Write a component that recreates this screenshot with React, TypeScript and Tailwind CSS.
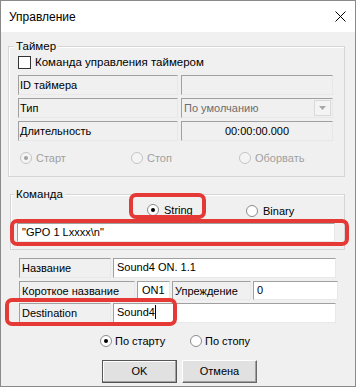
import React from "react";

const sunken = "border border-t-[#a0a0a0] border-l-[#a0a0a0] border-b-[#e8e8e8] border-r-[#e8e8e8]";

function Radio({ checked, disabled }: { checked?: boolean; disabled?: boolean }) {
  return (
    <svg width="12" height="12" viewBox="0 0 12 12" className="shrink-0">
      <circle cx="6" cy="6" r="5.5" fill={disabled ? "#f4f4f4" : "#fff"} stroke={disabled ? "#c4c4c4" : "#8a8a8a"} />
      {checked && <circle cx="6" cy="6" r="2" fill={disabled ? "#a0a0a0" : "#000"} />}
    </svg>
  );
}

function Label({ text, className }: { text: string; className: string }) {
  return (
    <div className={`${sunken} bg-[#f0f0f0] h-full flex items-center pl-[2px] pt-[1px] whitespace-nowrap ${className}`}>
      {text}
    </div>
  );
}

function Edit({ text, className, caret }: { text: string; className: string; caret?: boolean }) {
  return (
    <div className={`${sunken} bg-white h-full pl-[3px] pt-[1px] leading-[14px] whitespace-nowrap flex ${className}`}>
      {text}
      {caret && <span className="inline-block w-px h-[14px] bg-black" />}
    </div>
  );
}

export default function App() {
  return (
    <div className="w-[358px] h-[390px] bg-white text-[11px] text-black font-['Liberation_Sans',Arial,sans-serif]">
      <div className="w-[356px] h-[387px] border border-[#8a8a8a] flex flex-col">
        {/* title bar */}
        <div className="h-[31px] bg-white flex items-center justify-between pl-[8px] pr-[9px]">
          <span className="text-[12px]">Управление</span>
          <svg width="11" height="11" viewBox="0 0 11 11">
            <path d="M0.5 0.5 L10.5 10.5 M10.5 0.5 L0.5 10.5" stroke="#000" strokeWidth="1" />
          </svg>
        </div>

        {/* body */}
        <div className="relative flex-1 bg-[#f0f0f0] flex flex-col">
          {/* Таймер */}
          <div className="relative mt-[14px] ml-[7px] w-[337px] h-[131px] border border-[#d5d5d5] shadow-[inset_1px_1px_0_#fff] pt-[9px] pl-[9px]">
            <span className="absolute -top-[8px] left-[5px] px-[2px] bg-[#f0f0f0] leading-[14px] text-[11.5px]">Таймер</span>
            <div className="flex items-center h-[13px]">
              <div className="w-[13px] h-[13px] border border-[#333] bg-white" />
              <span className="ml-[4px] text-[11.5px]">Команда управления таймером</span>
            </div>
            <div className="mt-[6px] flex flex-col gap-[3px]">
              <div className="flex h-[20px] gap-[3px]">
                <Label text="ID таймера" className="w-[160px] !pl-[1px]" />
                <div className={`${sunken} bg-[#f0f0f0] w-[152px]`} />
              </div>
              <div className="flex h-[20px] gap-[3px]">
                <Label text="Тип" className="w-[160px] !pl-[1px]" />
                <div className={`${sunken} bg-[#f0f0f0] w-[152px] flex items-center justify-between pl-[2px] pr-[1px] text-[#6d6d6d]`}>
                  <span>По умолчанию</span>
                  <div className="w-[17px] h-[16px] bg-[#f4f4f4] border border-[#d9d9d9] flex items-center justify-center">
                    <svg width="7" height="4" viewBox="0 0 7 4">
                      <path d="M0 0 H7 L3.5 4 Z" fill="#a8a8a8" />
                    </svg>
                  </div>
                </div>
              </div>
              <div className="flex h-[20px] gap-[3px]">
                <Label text="Длительность" className="w-[160px] !pl-[1px]" />
                <div className={`${sunken} bg-[#f0f0f0] w-[152px] flex items-center justify-center`}>00:00:00.000</div>
              </div>
            </div>
            <div className="mt-[11px] flex items-center h-[12px] text-[#a0a0a0] pl-[2px]">
              <div className="w-[111px] flex items-center gap-[4px]">
                <Radio checked disabled />
                <span>Старт</span>
              </div>
              <div className="w-[108px] flex items-center gap-[4px]">
                <Radio disabled />
                <span>Стоп</span>
              </div>
              <div className="flex items-center gap-[4px]">
                <Radio disabled />
                <span>Оборвать</span>
              </div>
            </div>
          </div>

          {/* Команда */}
          <div className="relative mt-[17px] ml-[9px] w-[335px] h-[56px] border border-[#d5d5d5] shadow-[inset_1px_1px_0_#fff] pt-[9px] pl-[6px]">
            <span className="absolute -top-[8px] left-[3px] px-[2px] bg-[#f0f0f0] leading-[14px] text-[11.5px]">Команда</span>
            <div className="flex items-center h-[12px] pl-[130px]">
              <div className="w-[99px] flex items-center gap-[5px]">
                <Radio checked />
                <span>String</span>
              </div>
              <div className="flex items-center gap-[5px] mt-[2px]">
                <Radio />
                <span>Binary</span>
              </div>
            </div>
            <div className={`mt-[7px] w-[318px] h-[19px] ${sunken} bg-white pl-[4px] pt-[1px] leading-[14px]`}>"GPO 1 Lxxxx\n"</div>
          </div>

          {/* rows */}
          <div className="mt-[8px] ml-[18px] flex flex-col gap-[3px]">
            <div className="flex h-[20px] gap-[2px]">
              <Label text="Название" className="w-[92px]" />
              <Edit text="Sound4 ON. 1.1" className="w-[223px]" />
            </div>
            <div className="flex h-[19px] gap-[2px]">
              <Label text="Короткое название" className="w-[116px]" />
              <Edit text="ON1" className="w-[33px] !pl-[4px]" />
              <Label text="Упреждение" className="w-[79px]" />
              <Edit text="0" className="w-[85px]" />
            </div>
            <div className="flex h-[20px] gap-[2px]">
              <Label text="Destination" className="w-[92px]" />
              <Edit text="Sound4" className="w-[223px]" caret />
            </div>
          </div>

          <div className="mt-[12px] flex items-center h-[12px] pl-[99px]">
            <div className="w-[90px] flex items-center gap-[3px]">
              <Radio checked />
              <span>По старту</span>
            </div>
            <div className="flex items-center gap-[3px]">
              <Radio />
              <span>По стопу</span>
            </div>
          </div>

          <div className="mt-[13px] flex gap-[5px] pl-[101px]">
            <button className="w-[75px] h-[23px] bg-[#e1e1e1] border border-[#555] shadow-[inset_-1px_-1px_0_#a0a0a0,inset_1px_1px_0_#fff]">OK</button>
            <button className="w-[75px] h-[23px] bg-[#e1e1e1] border border-t-white border-l-white border-b-[#6a6a6a] border-r-[#6a6a6a] shadow-[inset_-1px_-1px_0_#a0a0a0]">Отмена</button>
          </div>

          {/* highlight annotations */}
          <div className="absolute left-[128px] top-[161px] w-[77px] h-[26px] border-[4px] border-[#e53935] rounded-[7px]" />
          <div className="absolute left-[9px] top-[187px] w-[339px] h-[27px] border-[4px] border-[#e53935] rounded-[7px]" />
          <div className="absolute left-[4px] top-[266px] w-[172px] h-[28px] border-[4px] border-[#e53935] rounded-[7px]" />
        </div>
      </div>
    </div>
  );
}
